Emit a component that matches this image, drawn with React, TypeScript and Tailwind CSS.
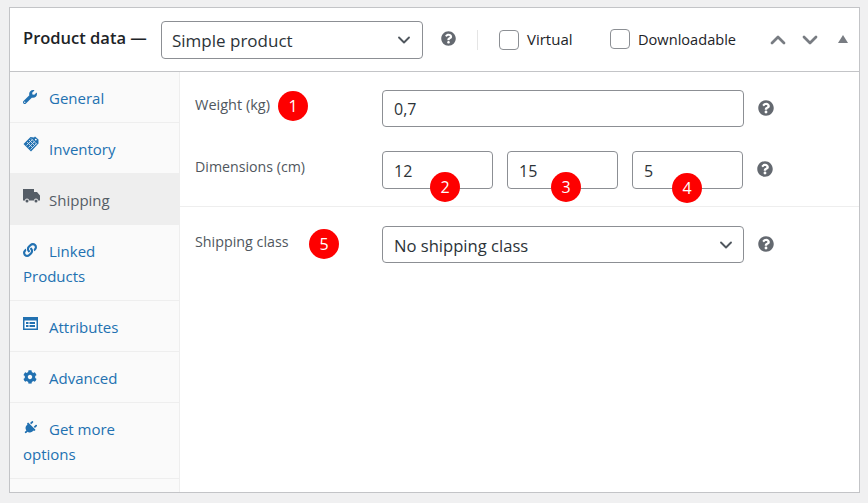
import React from 'react';
import { ChevronDown, ChevronUp } from 'lucide-react';
import { FaCog, FaLink, FaPlug, FaQuestionCircle, FaWrench } from 'react-icons/fa';

const TagIcon = () => (
  <svg width="16" height="16" viewBox="0 0 16 16" className="text-[#2271b1]">
    <path fill="currentColor" d="M0.5 8 L7.5 1 L11 1.5 L12 0.5 L15.5 3.5 L15.5 7.5 L8 15.5 Z" />
    <g stroke="#cfe0ee" strokeWidth="0.9">
      <path d="M4 6 L10 12 M6 4 L12 10 M8 2.5 L14 8.5" />
      <path d="M3.5 9.5 L9.5 3.5 M5.5 11.5 L11.5 5.5 M7.5 13.5 L13.5 7.5" />
    </g>
    <circle cx="12.8" cy="3.6" r="0.9" fill="#fff" />
  </svg>
);

const TruckIcon = () => (
  <svg width="17" height="14" viewBox="0 0 17 14" className="text-[#555d66]">
    <path fill="currentColor" d="M0 0 H11 V3 H14 L17 6.5 V11.5 H15 A2 2 0 0 0 11 11.5 H6 A2 2 0 0 0 2 11.5 H0 Z" />
    <circle cx="4" cy="12" r="1.5" fill="currentColor" />
    <circle cx="13" cy="12" r="1.5" fill="currentColor" />
  </svg>
);

const AttributesIcon = () => (
  <svg width="15" height="13" viewBox="0 0 15 13" className="text-[#2271b1]">
    <path fill="currentColor" d="M0 0 H15 V13 H0 Z" />
    <path fill="#fff" d="M1.5 3.5 H13.5 V11.5 H1.5 Z" />
    <path fill="currentColor" d="M3 5 H5.5 V7 H3 Z M3 8 H5.5 V10 H3 Z M6.5 5 H12 V7 H6.5 Z M6.5 8 H12 V10 H6.5 Z" />
  </svg>
);

const Tab = ({ icon, label, active }: { icon: React.ReactNode; label: string; active?: boolean }) => (
  <div
    className={`pl-[13px] pr-[30px] pt-[14px] pb-[11px] leading-[25px] text-[15px] border-b border-[#eeeeee] ${
      active ? 'bg-[#eeeeee] text-[#555d66]' : 'text-[#2271b1]'
    }`}
  >
    <span className="inline-block w-[26px] leading-none relative -top-[3px]">{icon}</span>
    {label}
  </div>
);

const Help = () => <FaQuestionCircle size={16} className="text-[#646970] shrink-0 -mt-[2px]" />;

const Badge = ({ n, className }: { n: number; className: string }) => (
  <span
    className={`absolute w-[30px] h-[30px] rounded-full bg-[#fe0000] text-white text-[16px] flex items-center justify-center ${className}`}
  >
    {n}
  </span>
);

const Field = ({ value, className }: { value: string; className: string }) => (
  <div className={`border border-[#8c8f94] rounded-[4px] bg-white flex items-center pl-[11px] pt-[1px] text-[16px] text-[#2c3338] ${className}`}>
    {value}
  </div>
);

const Check = ({ label, className }: { label: string; className: string }) => (
  <div className={`flex items-center gap-[8px] text-[#1d2327] ${className}`}>
    <span className="w-[20px] h-[20px] border border-[#8c8f94] rounded-[4px] bg-white" />
    {label}
  </div>
);

export default function App() {
  return (
    <div
      className="w-[868px] h-[503px] bg-[#f0f0f1] pt-[7px] pl-[9px] overflow-hidden"
      style={{ fontFamily: '"Open Sans", "Noto Sans", sans-serif' }}
    >
      <div className="w-[851px] h-[486px] bg-white border border-[#c3c4c7] flex flex-col">
        <header className="h-[64px] shrink-0 border-b border-[#c3c4c7] flex items-center pl-[13px]">
          <span className="text-[16.5px] font-semibold text-[#1d2327] w-[138px] -mt-[2px] whitespace-nowrap">Product data —</span>
          <div className="w-[262px] h-[38px] border border-[#8c8f94] rounded-[4px] flex items-center justify-between pl-[10px] pr-[8px] text-[17px] text-[#2c3338]">
            <span className="pt-[3px]">Simple product</span>
            <ChevronDown size={20} strokeWidth={2.25} className="text-[#50575e]" />
          </div>
          <div className="ml-[18px] mr-[21px] -mt-[2px]"><FaQuestionCircle size={15} className="text-[#646970]" /></div>
          <div className="w-px h-[20px] bg-[#e5e5e5]" />
          <Check label="Virtual" className="ml-[21px] w-[111px] text-[15px]" />
          <Check label="Downloadable" className="w-[147px] text-[14.6px]" />
          <ChevronUp size={24} strokeWidth={2.75} className="text-[#787c82] ml-[9px]" />
          <ChevronDown size={24} strokeWidth={2.75} className="text-[#787c82] ml-[8px]" />
          <span className="ml-[16px] -mt-[2px] w-0 h-0 border-x-[5px] border-x-transparent border-b-[8px] border-b-[#787c82]" />
        </header>
        <div className="flex flex-1 min-h-0">
          <aside className="w-[170px] shrink-0 bg-[#fafafa] border-r border-[#eeeeee]">
            <Tab icon={<FaWrench size={14} className="inline" />} label="General" />
            <Tab icon={<TagIcon />} label="Inventory" />
            <Tab icon={<TruckIcon />} label="Shipping" active />
            <Tab icon={<FaLink size={14} className="inline" />} label="Linked Products" />
            <Tab icon={<AttributesIcon />} label="Attributes" />
            <Tab icon={<FaCog size={14} className="inline" />} label="Advanced" />
            <Tab icon={<FaPlug size={14} className="inline rotate-45" />} label="Get more options" />
          </aside>
          <main className="flex-1 relative">
            <div className="pt-[18px] pb-[17px] border-b border-[#eeeeee]">
              <div className="flex items-center pl-[15px]">
                <span className="w-[187px] text-[14.5px] text-[#50575e] -mt-[7px]">Weight (kg)</span>
                <Field value="0,7" className="w-[362px] h-[37px]" />
                <span className="ml-[14px]"><Help /></span>
              </div>
              <div className="flex items-center pl-[15px] mt-[24px]">
                <span className="w-[187px] text-[14.2px] text-[#50575e] -mt-[7px]">Dimensions (cm)</span>
                <div className="flex gap-[14px]">
                  <Field value="12" className="w-[111px] h-[38px]" />
                  <Field value="15" className="w-[111px] h-[38px]" />
                  <Field value="5" className="w-[111px] h-[38px]" />
                </div>
                <span className="ml-[14px]"><Help /></span>
              </div>
            </div>
            <div className="flex items-center pl-[15px] pt-[19px]">
              <span className="w-[187px] text-[14.3px] text-[#50575e] -mt-[5px]">Shipping class</span>
              <div className="w-[362px] h-[37px] border border-[#8c8f94] rounded-[4px] flex items-center justify-between pl-[11px] pr-[7px] text-[16.6px] text-[#2c3338]">
                <span className="pt-[3px]">No shipping class</span>
                <ChevronDown size={20} strokeWidth={2.25} className="text-[#50575e]" />
              </div>
              <span className="ml-[14px]"><Help /></span>
            </div>
            <Badge n={1} className="left-[98px] top-[19px]" />
            <Badge n={2} className="left-[250px] top-[100px]" />
            <Badge n={3} className="left-[371px] top-[100px]" />
            <Badge n={4} className="left-[492px] top-[101px]" />
            <Badge n={5} className="left-[129px] top-[157px]" />
          </main>
        </div>
      </div>
    </div>
  );
}
